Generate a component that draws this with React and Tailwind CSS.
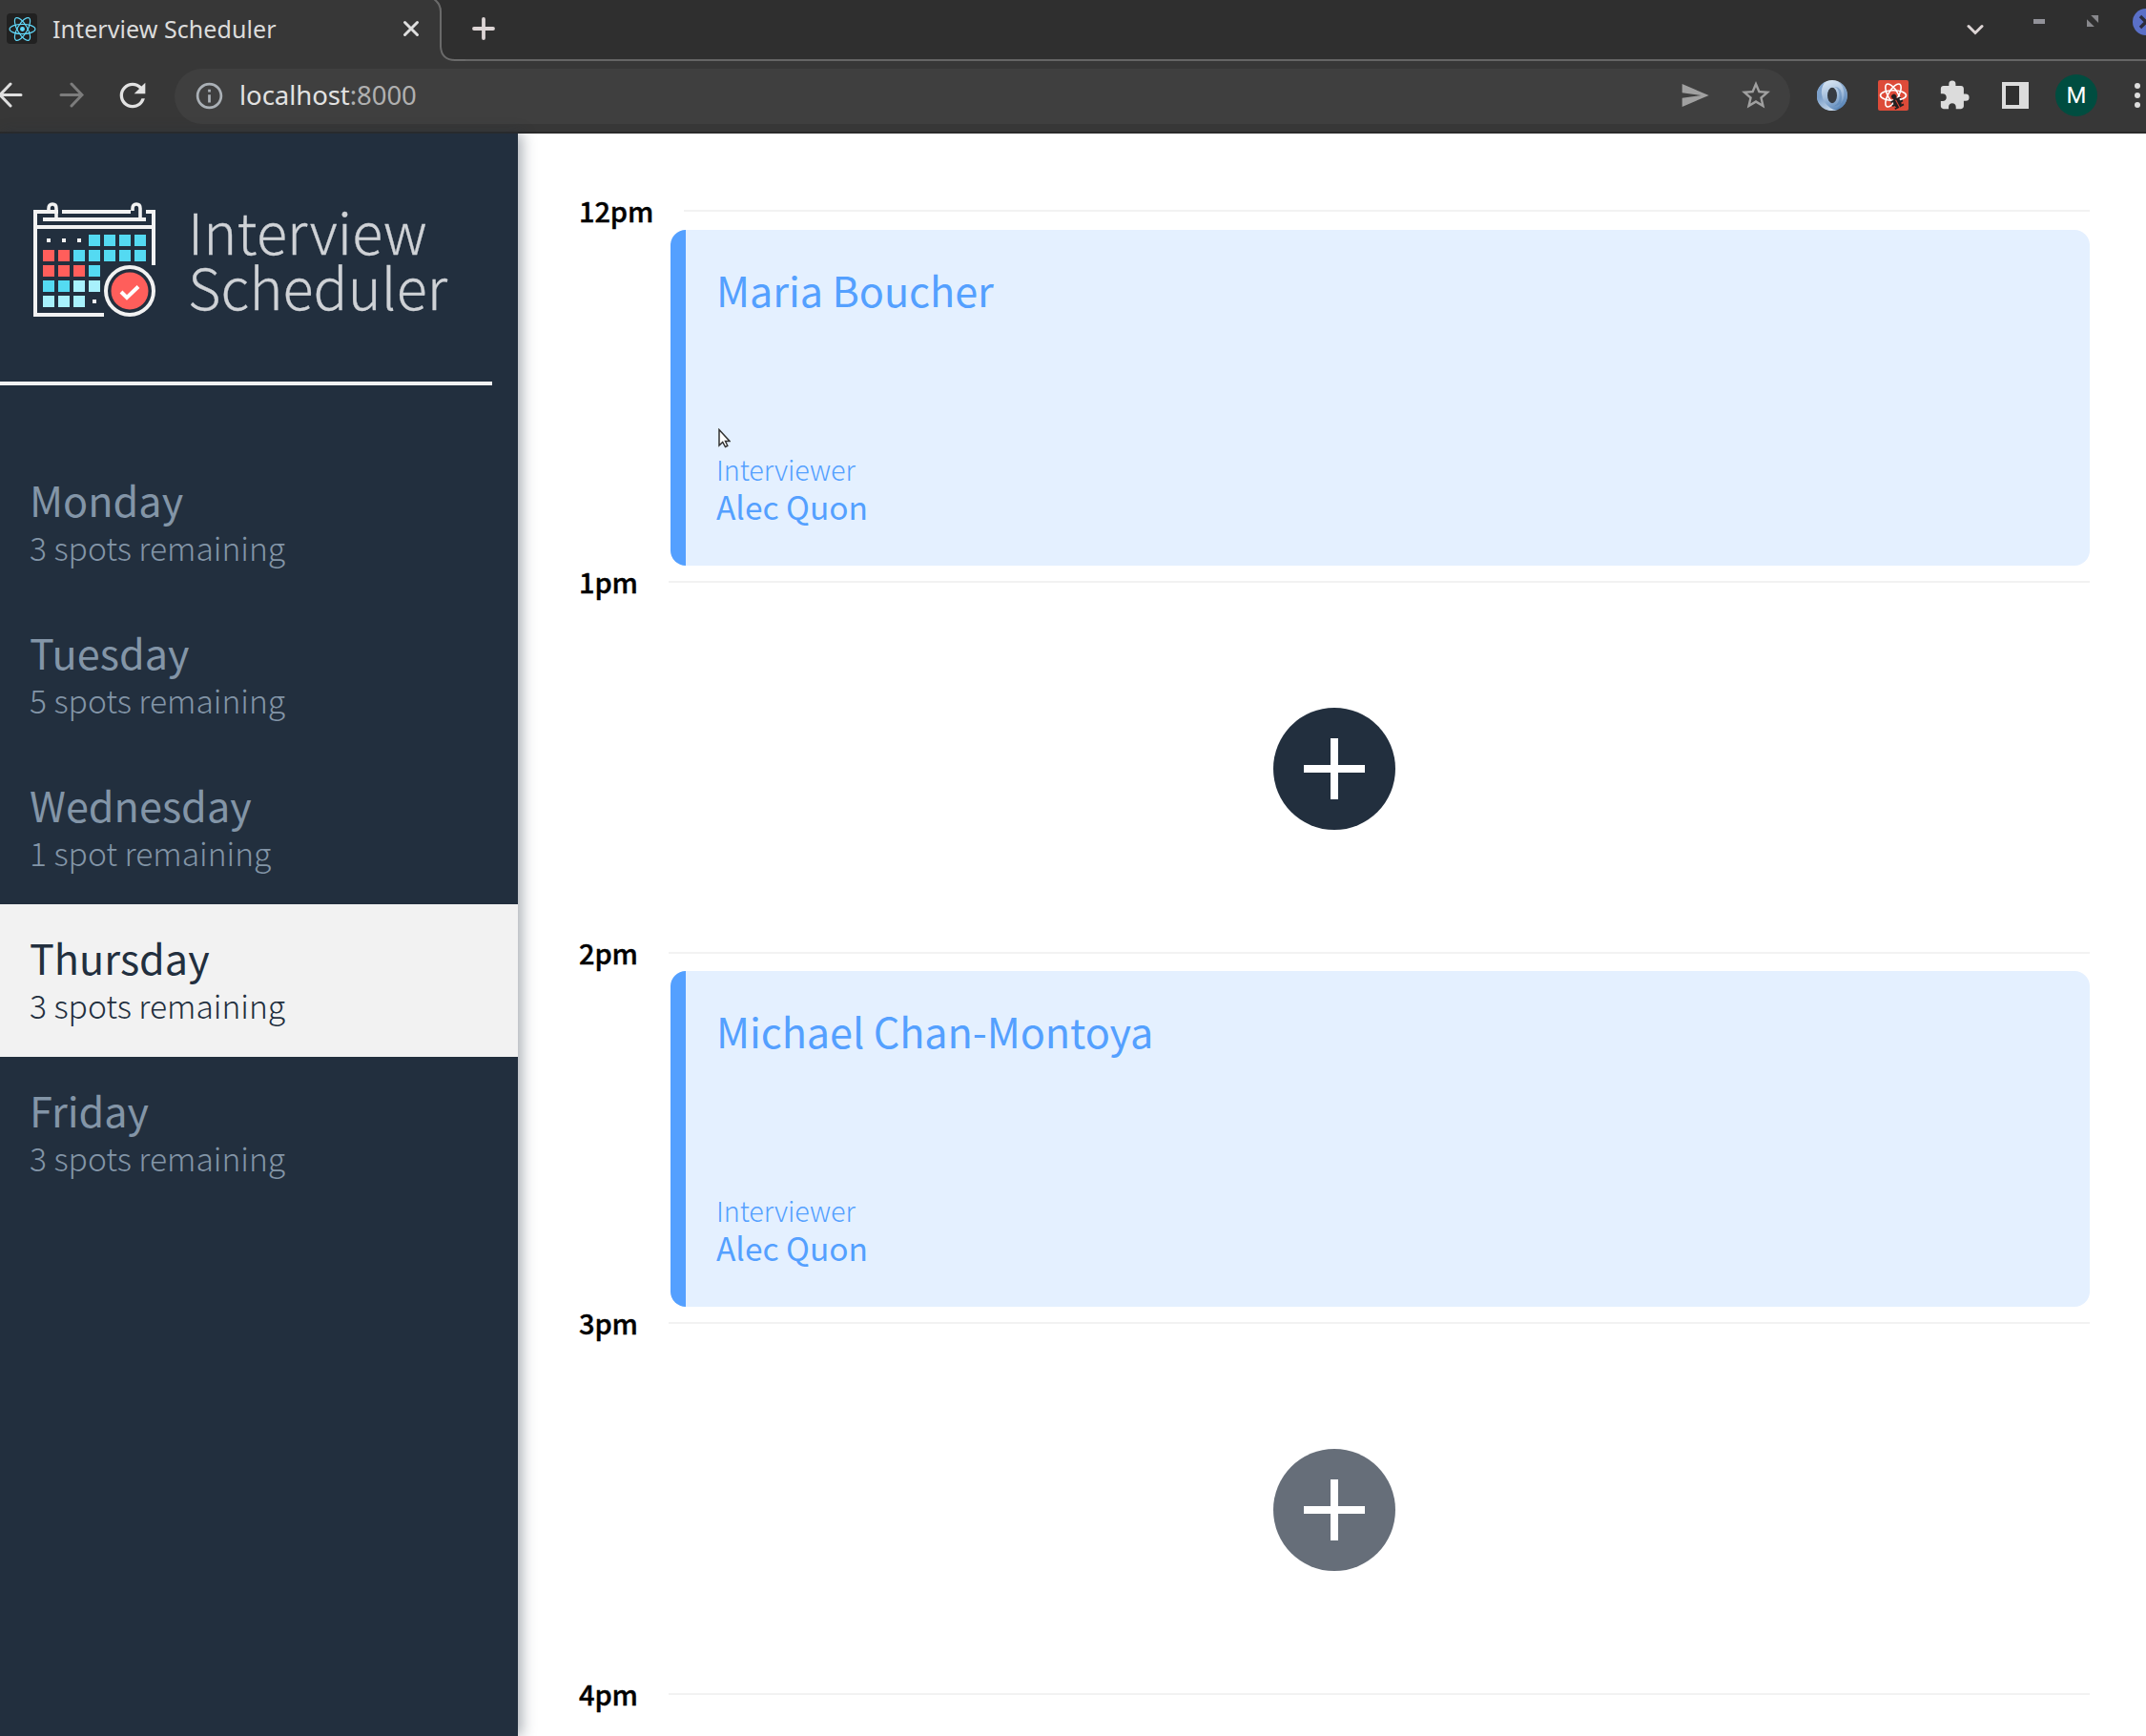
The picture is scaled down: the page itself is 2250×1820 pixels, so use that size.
import React from "react";
import { MdExtension, MdInfoOutline, MdRefresh, MdSend, MdStarBorder } from "react-icons/md";

const DAYS = [
  { name: "Monday", spots: "3 spots remaining" },
  { name: "Tuesday", spots: "5 spots remaining" },
  { name: "Wednesday", spots: "1 spot remaining" },
  { name: "Thursday", spots: "3 spots remaining", selected: true },
  { name: "Friday", spots: "3 spots remaining" },
];

const SLOTS = [
  { time: "12pm", student: "Maria Boucher", interviewer: "Alec Quon" },
  { time: "1pm" },
  { time: "2pm", student: "Michael Chan-Montoya", interviewer: "Alec Quon" },
  { time: "3pm", hovered: true },
  { time: "4pm" },
];

function Atom({ className, color, width = 1.2 }) {
  return (
    <svg viewBox="-12 -12 24 24" className={className} fill="none" stroke={color} strokeWidth={width}>
      <ellipse rx="10.4" ry="4" />
      <ellipse rx="10.4" ry="4" transform="rotate(60)" />
      <ellipse rx="10.4" ry="4" transform="rotate(120)" />
      <circle r="1.9" fill={color} stroke="none" />
    </svg>
  );
}

function TabStrip() {
  return (
    <div className="flex h-[64px] shrink-0 bg-[#2f2f2f]">
      <div className="flex w-[448px] items-center bg-[#373737] pb-1 pl-[7px]">
        <div className="flex h-8 w-8 items-center justify-center rounded-[4px] bg-[#212121]">
          <Atom className="h-[31px] w-[31px]" color="#61dafb" width={0.9} />
        </div>
        <span className="ml-[16px] w-[360px] whitespace-nowrap font-['Noto_Sans'] text-[25px] leading-[34px] tracking-[0.07px] text-[#dcdcdc]">
          Interview Scheduler
        </span>
        <svg viewBox="0 0 18 18" className="ml-[7px] h-[18px] w-[18px] shrink-0" stroke="#dfdfdf" strokeWidth="3" strokeLinecap="round">
          <path d="M2.5 2.5 15.5 15.5M15.5 2.5 2.5 15.5" />
        </svg>
      </div>
      <svg viewBox="0 0 40 64" className="h-[64px] w-[40px] shrink-0">
        <path d="M0 0H8Q14 4 14 12V50Q15 63 29 63H40V64H0Z" fill="#373737" />
        <path d="M7 -1Q14 4 14 12V49Q15 63 29 63H40" fill="none" stroke="#6a6a6a" strokeWidth="2" />
      </svg>
      <div className="flex flex-1 items-start justify-between overflow-hidden border-b-2 border-[#656565]">
        <svg viewBox="0 0 24 24" className="ml-[7px] mt-[18px] h-6 w-6" stroke="#ddd5d5" strokeWidth="3.8" strokeLinecap="round">
          <path d="M12 2V22M2 12H22" />
        </svg>
        <div className="flex items-start">
          <svg viewBox="0 0 20 13" className="mt-[24px] h-[13px] w-5" fill="none" stroke="#ddd5d5" strokeWidth="3" strokeLinecap="round">
            <path d="M2 3.5 9 10.5 16 3.5" />
          </svg>
          <div className="ml-[50px] mt-[20px] h-[5px] w-3 bg-[#929299]" />
          <svg viewBox="0 0 14 14" className="ml-[44px] mt-[16px] h-[13px] w-[13px]" fill="#88888c">
            <path d="M4.5 0H13V8.5ZM0 4.5 8.5 13H0Z" />
          </svg>
          <svg viewBox="0 0 14 30" className="ml-[35px] mt-[8px] h-[30px] w-[14px]">
            <circle cx="14" cy="15" r="14" fill="#5a70c8" />
            <path d="M8 9 20 21M20 9 8 21" stroke="#2b2d3c" strokeWidth="3.4" />
          </svg>
        </div>
      </div>
    </div>
  );
}

function Toolbar() {
  return (
    <div className="flex h-[76px] shrink-0 items-center overflow-hidden border-b-2 border-[#2a2a2a] bg-[#373737] pb-[2px]">
      <svg viewBox="0 0 26 28" className="-ml-[2px] h-7 w-[26px] shrink-0" fill="none" stroke="#dfdfdf" strokeWidth="3" strokeLinecap="round">
        <path d="M13 2 2 13.500 13 25M2 13.500H24" />
      </svg>
      <svg viewBox="0 0 26 28" className="ml-[38px] h-7 w-[26px] shrink-0" fill="none" stroke="#7c7c7c" strokeWidth="3" strokeLinecap="round">
        <path d="M13 2 24 13.500 13 25M24 13.500H2" />
      </svg>
      <MdRefresh className="ml-[31px] h-10 w-10 shrink-0 text-[#e2e2e2]" />
      <div className="ml-[24px] mt-[2px] flex h-[58px] w-[1694px] items-center rounded-full bg-[#3f3f3f] pb-[2px]">
        <MdInfoOutline className="ml-[20px] h-[33px] w-[33px] text-[#aab0b6]" />
        <span className="ml-[15px] flex-1 whitespace-nowrap font-['Noto_Sans'] text-[27.5px] leading-[36px] tracking-[-0.05px] text-[#e2e2e2]">
          localhost<span className="text-[#b0b0b0]">:8000</span>
        </span>
        <MdSend className="h-8 w-8 text-[#a0a0a0]" />
        <MdStarBorder className="ml-[30px] mr-[18px] h-9 w-9 text-[#a0a0a0]" />
      </div>
      <svg viewBox="0 0 32 32" className="ml-[28px] h-8 w-8 shrink-0">
        <defs>
          <linearGradient id="ringOuter" x1="0.2" y1="0" x2="0.6" y2="1">
            <stop offset="0" stopColor="#7fa3cd" />
            <stop offset="0.45" stopColor="#7b9fc9" />
            <stop offset="1" stopColor="#c9daec" />
          </linearGradient>
          <linearGradient id="ringInner" x1="0.3" y1="0" x2="0.6" y2="1">
            <stop offset="0" stopColor="#d9e6f3" />
            <stop offset="0.5" stopColor="#a5bfdd" />
            <stop offset="1" stopColor="#5f8abb" />
          </linearGradient>
        </defs>
        <circle cx="16" cy="16" r="16" fill="url(#ringInner)" />
        <path d="M9 1.600Q4 7 5 15T14 29Q20 33 24 29.800A16 16 0 1 1 9 1.600Z" fill="url(#ringOuter)" />
        <path d="M18 7Q23 8 23.500 16T18 27.500Q28 26 28.500 16T22 1.500Q31 5 32 16 31 26 24 29.800 20 32 16 31.500 26 30 26 18T18 7Z" fill="#4e7cb1" fillOpacity="0.45" />
        <ellipse cx="16" cy="16" rx="5" ry="8.200" fill="#363b42" />
      </svg>
      <svg viewBox="-16 -16 32 32" className="ml-[32px] h-8 w-8 shrink-0">
        <rect x="-16" y="-16" width="32" height="32" rx="2" fill="#dd4b39" />
        <g fill="none" stroke="#fff" strokeWidth="1.6">
          <ellipse rx="13.500" ry="5.300" />
          <ellipse rx="13.500" ry="5.300" transform="rotate(60)" />
          <ellipse rx="13.500" ry="5.300" transform="rotate(120)" />
        </g>
        <path d="M1 6 15 5 13 15H1Z" fill="#dd4b39" />
        <g transform="translate(3.500 6.500) rotate(-28)" fill="#231f20" stroke="#231f20">
          <ellipse cx="0" cy="1.500" rx="3.600" ry="5" />
          <circle cx="0" cy="-6" r="2.600" strokeWidth="0" />
          <path d="M-5.800 -2 5.800 -2M-6.200 2H6.200M-5.200 6 5.200 6" strokeWidth="1.900" />
          <path d="M0 -2V7" stroke="#dd4b39" strokeWidth="1" />
        </g>
      </svg>
      <MdExtension className="mb-px ml-[31px] h-[34px] w-[34px] shrink-0 text-[#dcdcdc]" />
      <div className="ml-[33px] h-7 w-7 shrink-0 border-4 border-r-[10px] border-[#dcdcdc] bg-[#303030]" />
      <div className="ml-[28px] flex h-11 w-11 shrink-0 items-center justify-center rounded-full bg-[#004d40] font-['Roboto'] text-[24px] leading-none text-white">
        M
      </div>
      <div className="ml-[39px] flex shrink-0 flex-col gap-1">
        <div className="h-1.5 w-1.5 rounded-full bg-[#dcdcdc]" />
        <div className="h-1.5 w-1.5 rounded-full bg-[#dcdcdc]" />
        <div className="h-1.5 w-1.5 rounded-full bg-[#dcdcdc]" />
      </div>
    </div>
  );
}

const CALENDAR = [
  "...bbbb",
  "rrbbbbb",
  "rrrb",
  "bbcc",
  "ccc.",
];
const CELL_COLORS = { b: "#54daf2", r: "#ff5e5b", c: "#a8f1fc" };

function CalendarLogo() {
  return (
    <svg viewBox="0 0 128 120" className="h-[120px] w-32 shrink-0" fill="none">
      <g stroke="#f2f2f2" strokeWidth="4">
        <path d="M26 10H2V118H74M118 10H126V66M30 10H102" />
        <path d="M10 18H118M2 26H126" />
        <path d="M16 9V6.500Q16 2 20 2T24 6.500V18M104 9V6.500Q104 2 108 2T112 6.500V18" strokeWidth="3.600" />
      </g>
      {CALENDAR.map((row, r) =>
        row.split("").map((cell, c) =>
          cell === "." ? (
            <rect key={`${r}-${c}`} x={14 + c * 16} y={38 + r * 16} width="4" height="4" fill="#f2f2f2" />
          ) : (
            <rect key={`${r}-${c}`} x={10 + c * 16} y={34 + r * 16} width="12" height="12" fill={CELL_COLORS[cell]} />
          )
        )
      )}
      <circle cx="101" cy="93" r="25" stroke="#f2f2f2" strokeWidth="4" />
      <circle cx="101" cy="93" r="19.500" fill="#ff5e5b" />
      <path d="M92 94 98 100 110 88.500" stroke="#fff" strokeWidth="4" />
    </svg>
  );
}

function Sidebar() {
  return (
    <aside className="z-10 flex w-[543px] shrink-0 flex-col bg-[#222f3e] shadow-[4px_0_14px_rgba(34,47,62,0.4)]">
      <div className="flex h-[260px] items-start pl-[35px] pt-[72px]">
        <CalendarLogo />
        <div className="ml-[34px] text-[59.4px] font-light leading-[58px] tracking-[0.15px] text-[#cfd2d6] [-webkit-text-stroke:0.3px_#cfd2d6]">
          <p>Interview</p>
          <p>Scheduler</p>
        </div>
      </div>
      <hr className="w-[516px] border-0 border-t-4 border-[#f2f2f2]" />
      <nav className="mt-[64px]">
        <ul>
          {DAYS.map((day) => (
            <li
              key={day.name}
              className={`h-40 px-[31px] pt-[31px] ${day.selected ? "bg-[#f2f2f2] text-[#222f3e]" : "text-[#8395a7]"}`}
            >
              <h2 className="text-[43.2px] leading-[48px]">{day.name}</h2>
              <h3 className="mt-[4px] text-[33.6px] font-light leading-[46px]">{day.spots}</h3>
            </li>
          ))}
        </ul>
      </nav>
    </aside>
  );
}

function Pointer() {
  return (
    <svg viewBox="0 0 13 21" className="absolute left-[34px] top-[208px] h-[21px] w-[13px]">
      <path d="M1 1.500V18L4.700 14.500 7.500 19.500 9.800 18.300 7.500 13.500H12Z" fill="#fff" stroke="#333" strokeWidth="1.500" />
    </svg>
  );
}

function Appointment({ student, interviewer, pointer }) {
  return (
    <article className="relative ml-24 flex h-[352px] flex-col rounded-2xl border-l-[16px] border-[#54a0ff] bg-[#e4f0ff] pb-[42px] pl-8 pt-[38px] text-[#54a0ff]">
      <h2 className="text-[43.2px] leading-[48px] tracking-[-0.08px]">{student}</h2>
      <div className="mt-auto">
        <h4 className="text-[28.8px] font-light leading-[39px] tracking-[-0.1px]">Interviewer</h4>
        <h3 className="text-[33.5px] leading-[40px]">{interviewer}</h3>
      </div>
      {pointer && <Pointer />}
    </article>
  );
}

function AddButton({ hovered }) {
  return (
    <div className="flex h-[352px] items-center justify-center">
      <div className={`flex h-32 w-32 items-center justify-center rounded-full ${hovered ? "bg-[#666e79]" : "bg-[#222f3e]"}`}>
        <svg viewBox="0 0 64 64" className="h-16 w-16" fill="#fff">
          <path d="M28 0H36V28H64V36H36V64H28V36H0V28H28Z" />
        </svg>
      </div>
    </div>
  );
}

function Schedule() {
  return (
    <main className="flex-1 overflow-hidden bg-white pl-16 pr-[59px] pt-[64.4px]">
      {SLOTS.map((slot) => (
        <section key={slot.time}>
          <header className="flex h-[36.6px] items-start gap-8">
            <h4 className="text-[29px] font-medium leading-[32px] tracking-[-0.1px] text-black [-webkit-text-stroke:0.4px_#000]">{slot.time}</h4>
            <hr className="mt-[16px] flex-1 border-0 border-t-2 border-[#f2f2f2]" />
          </header>
          {slot.student ? (
            <Appointment student={slot.student} interviewer={slot.interviewer} pointer={slot.time === "12pm"} />
          ) : (
            slot.time !== "4pm" && <AddButton hovered={slot.hovered} />
          )}
        </section>
      ))}
    </main>
  );
}

export default function App() {
  return (
    <div className="flex h-[1820px] w-[2250px] flex-col overflow-hidden bg-white font-['Noto_Sans_CJK_SC',sans-serif]">
      <TabStrip />
      <Toolbar />
      <div className="flex min-h-0 flex-1">
        <Sidebar />
        <Schedule />
      </div>
    </div>
  );
}
